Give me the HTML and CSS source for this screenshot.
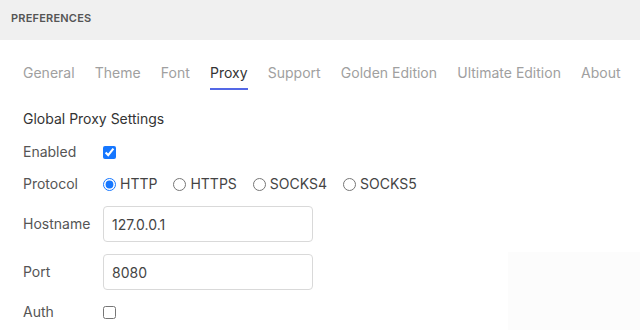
FILE: index.html
```html
<!DOCTYPE html>
<html lang="en">
<head>
    <meta charset="UTF-8">
    <meta name="viewport" content="width=device-width, initial-scale=1.0">
    <title>Preferences</title>
    <link rel="stylesheet" href="styles.css">
</head>
<body>
<div class="prefs">
    <div class="prefs-header">PREFERENCES</div>

    <div class="tabs">
        <div class="tab">General</div>
        <div class="tab">Theme</div>
        <div class="tab">Font</div>
        <div class="tab active">Proxy</div>
        <div class="tab">Support</div>
        <div class="tab">Golden Edition</div>
        <div class="tab">Ultimate Edition</div>
        <div class="tab">About</div>
    </div>

    <div class="panel">
        <div class="section-title">Global Proxy Settings</div>

        <div class="form-row">
            <label class="form-label" for="enabled">Enabled</label>
            <input type="checkbox" id="enabled" class="check" checked>
        </div>

        <div class="form-row">
            <span class="form-label">Protocol</span>
            <div class="radio-group">
                <label class="radio"><input type="radio" name="protocol" checked>HTTP</label>
                <label class="radio"><input type="radio" name="protocol">HTTPS</label>
                <label class="radio"><input type="radio" name="protocol">SOCKS4</label>
                <label class="radio"><input type="radio" name="protocol">SOCKS5</label>
            </div>
        </div>

        <div class="form-row">
            <label class="form-label" for="hostname">Hostname</label>
            <input type="text" id="hostname" class="text-input" value="127.0.0.1">
        </div>

        <div class="form-row">
            <label class="form-label" for="port">Port</label>
            <input type="text" id="port" class="text-input" value="8080">
        </div>

        <div class="form-row">
            <label class="form-label" for="auth">Auth</label>
            <input type="checkbox" id="auth" class="check">
        </div>
    </div>

    <div class="ghost"></div>
</div>
</body>
</html>
```

FILE: styles.css
```css
* {
    margin: 0;
    padding: 0;
    box-sizing: border-box;
}

body {
    font-family: Inter, 'Noto Sans', sans-serif;
    background: white;
    color: #333;
    width: 640px;
    height: 330px;
    overflow: hidden;
}

.prefs {
    position: relative;
    height: 330px;
}

.prefs-header {
    height: 40px;
    background: #f0f0f0;
    padding: 10px 11px 0;
    font-size: 11px;
    line-height: 16px;
    font-weight: 600;
    color: #555;
    letter-spacing: 0.2px;
}

.tabs {
    display: flex;
    gap: 20.2px;
    padding: 0 23px;
    margin-top: 13px;
}

.tab {
    font-size: 14px;
    line-height: 20px;
    padding: 10px 0 5px;
    color: #a0a0a0;
    border-bottom: 2px solid transparent;
    cursor: pointer;
    white-space: nowrap;
}

.tab.active {
    color: #333;
    border-bottom-color: #5468e6;
}

.panel {
    padding: 19px 23px 0;
    display: flex;
    flex-direction: column;
    gap: 12px;
}

.section-title {
    font-size: 14px;
    line-height: 20px;
    color: #333;
    margin-bottom: 1px;
}

.form-row {
    display: flex;
    align-items: center;
    min-height: 20px;
}

.form-label {
    width: 80px;
    font-size: 14px;
    line-height: 20px;
    color: #555;
}

.check {
    width: 13px;
    height: 13px;
    margin: 0;
    accent-color: #1677ff;
}

.radio-group {
    display: flex;
    gap: 16px;
}

.radio {
    display: flex;
    align-items: center;
    gap: 4px;
    font-size: 14px;
    line-height: 20px;
    color: #444;
}

.radio input {
    width: 13px;
    height: 13px;
    margin: 0;
    accent-color: #1677ff;
}

.text-input {
    width: 210px;
    height: 36px;
    padding: 0 8px;
    border: 1px solid #d9d9d9;
    border-radius: 4px;
    font-family: inherit;
    font-size: 14px;
    color: #444;
    outline: none;
}

.ghost {
    position: absolute;
    left: 508px;
    top: 252px;
    right: 0;
    bottom: 0;
    background: #fcfcfc;
}
```
